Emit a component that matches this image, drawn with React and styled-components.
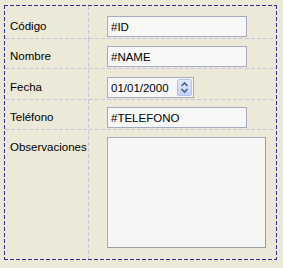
import React from 'react';
import styled, { createGlobalStyle } from 'styled-components';

const GlobalStyle = createGlobalStyle`
  html, body {
    margin: 0;
    padding: 0;
    background: #ece9d8;
  }
  body {
    font-family: "Liberation Sans", Arial, sans-serif;
    font-size: 11.5px;
    color: #000;
  }
`;

const dashH = (color) =>
  `repeating-linear-gradient(90deg, ${color} 0 4px, transparent 4px 6px)`;
const dashV = (color) =>
  `repeating-linear-gradient(180deg, ${color} 0 4px, transparent 4px 6px)`;

const Frame = styled.div`
  margin: 5px 0 0 4px;
  width: 273px;
  height: 255px;
  box-sizing: border-box;
  padding: 1px;
  background:
    ${dashH('#2e2e8c')} top left / 100% 1px no-repeat,
    ${dashH('#2e2e8c')} bottom left / 100% 1px no-repeat,
    ${dashV('#2e2e8c')} top left / 1px 100% no-repeat,
    ${dashV('#2e2e8c')} top right / 1px 100% no-repeat;
  display: grid;
  grid-template-columns: 84px 1fr;
  grid-template-rows: 33px 30px 31px 30px 1fr;
`;

const Cell = styled.div`
  display: flex;
  align-items: ${(p) => (p.$top ? 'flex-start' : 'flex-end')};
  padding: ${(p) => p.$pad || '0'};
  box-sizing: border-box;
  background:
    ${(p) => (p.$last ? 'none' : `${dashH('#c6c6dc')} bottom left / 100% 1px no-repeat`)}
    ${(p) => (p.$label ? `, ${dashV('#c6c6dc')} top right / 1px 100% no-repeat` : '')};
`;

const Label = styled.span`
  display: block;
  height: 21px;
  line-height: 21px;
  padding-left: 5px;
  white-space: nowrap;
`;

const Field = styled.div`
  width: ${(p) => p.$w}px;
  height: 21px;
  box-sizing: border-box;
  border: 1px solid #a7aac0;
  background: #f7f7f5;
  display: flex;
  align-items: center;
  padding-left: 3px;
  padding-right: 1px;
`;

const FieldText = styled.span`
  flex: 1;
  white-space: nowrap;
`;

const Spinner = styled.div`
  width: 15px;
  height: 17px;
  border-radius: 2px;
  background: linear-gradient(180deg, #dfe8fb 0%, #c3d3f7 100%);
  border: 1px solid #b3c4ea;
  box-sizing: border-box;
  display: flex;
  align-items: center;
  justify-content: center;
`;

const TextArea = styled.div`
  width: 159px;
  height: 111px;
  box-sizing: border-box;
  border: 1px solid #a7aac0;
  border-right-color: #9c9ca4;
  border-bottom-color: #9c9ca4;
  background: #f6f6f4;
`;

const SpinIcon = () => (
  <svg width="9" height="13" viewBox="0 0 9 13">
    <path d="M1.5 5 L4.5 2 L7.5 5" fill="none" stroke="#4d6185" strokeWidth="1.6" />
    <path d="M1.5 8 L4.5 11 L7.5 8" fill="none" stroke="#4d6185" strokeWidth="1.6" />
  </svg>
);

const rows = [
  { label: 'Código', value: '#ID' },
  { label: 'Nombre', value: '#NAME' },
  { label: 'Fecha', value: '01/01/2000', date: true },
  { label: 'Teléfono', value: '#TELEFONO' },
];

export default function App() {
  return (
    <>
      <GlobalStyle />
      <Frame>
        {rows.map((r) => (
          <React.Fragment key={r.label}>
            <Cell $label $pad="0 0 2px 0">
              <Label>{r.label}</Label>
            </Cell>
            <Cell $pad="0 0 2px 18px">
              {r.date ? (
                <Field $w={87}>
                  <FieldText>{r.value}</FieldText>
                  <Spinner>
                    <SpinIcon />
                  </Spinner>
                </Field>
              ) : (
                <Field $w={140}>
                  <FieldText>{r.value}</FieldText>
                </Field>
              )}
            </Cell>
          </React.Fragment>
        ))}
        <Cell $label $last $top $pad="7px 0 0 0">
          <Label>Observaciones</Label>
        </Cell>
        <Cell $last $top $pad="7px 0 0 18px">
          <TextArea />
        </Cell>
      </Frame>
    </>
  );
}
